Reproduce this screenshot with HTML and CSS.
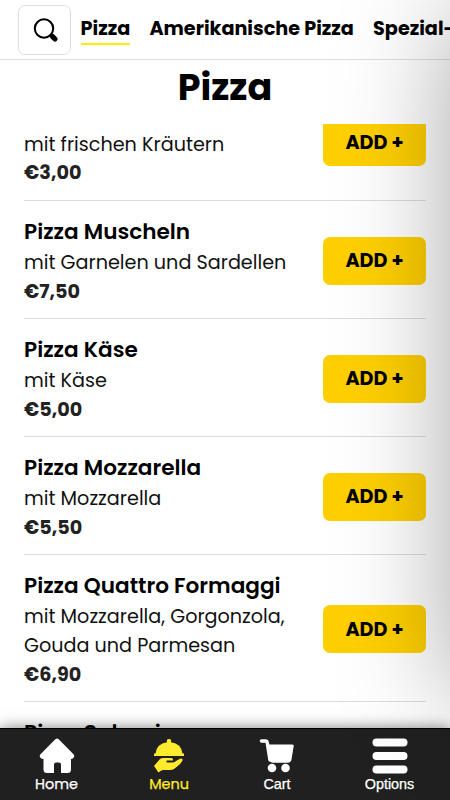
FILE: index.html
```html
<!DOCTYPE html>
<html lang="de">
<head>
<meta charset="utf-8">
<title>Pizza</title>
<link rel="stylesheet" href="styles.css">
</head>
<body>
<div class="app">
  <header class="categories">
    <button class="search" aria-label="Suche">
      <svg width="26" height="26" viewBox="0 0 26 26"><circle cx="11" cy="10.5" r="9.2" fill="none" stroke="#000" stroke-width="2.1"/><path d="M17.5 16.5l1.2 1.2" stroke="#000" stroke-width="2.500"/><path d="M19.3 18.3l2.7 2.7" stroke="#000" stroke-width="5.200" stroke-linecap="round"/></svg>
    </button>
    <a class="category active">Pizza</a>
    <a class="category">Amerikanische Pizza</a>
    <a class="category">Spezial-Pizza</a>
  </header>
  <h1 class="title">Pizza</h1>
  <main class="list">
    <article class="item first">
      <div class="info"><h2></h2><p>mit frischen Kräutern</p><strong>€3,00</strong></div>
      <button class="add">ADD +</button>
    </article>
    <article class="item">
      <div class="info"><h2>Pizza Muscheln</h2><p>mit Garnelen und Sardellen</p><strong>€7,50</strong></div>
      <button class="add">ADD +</button>
    </article>
    <article class="item">
      <div class="info"><h2>Pizza Käse</h2><p>mit Käse</p><strong>€5,00</strong></div>
      <button class="add">ADD +</button>
    </article>
    <article class="item">
      <div class="info"><h2>Pizza Mozzarella</h2><p>mit Mozzarella</p><strong>€5,50</strong></div>
      <button class="add">ADD +</button>
    </article>
    <article class="item">
      <div class="info"><h2>Pizza Quattro Formaggi</h2><p>mit Mozzarella, Gorgonzola,<br>Gouda und Parmesan</p><strong>€6,90</strong></div>
      <button class="add">ADD +</button>
    </article>
    <article class="item">
      <div class="info"><h2>Pizza Salami</h2></div>
    </article>
  </main>
  <nav class="tabs">
    <a class="tab home">
      <svg width="36" height="36" viewBox="0 0 36 36"><path fill="currentColor" d="M16.3 1.3Q18-.2 19.7 1.3L34.5 16.2Q36 18 34.5 19.8Q33.5 21 32 21V31.5Q32 35 28.5 35H22V26.5Q22 24.500 20 24.500H17Q15 24.500 15 26.500V35H8Q4.500 35 4.500 31.500V21Q2.500 21 1.500 19.800Q0 18 1.500 16.200Z"/></svg>
      <span>Home</span>
    </a>
    <a class="tab menu">
      <svg width="36" height="36" viewBox="0 0 36 36"><g fill="currentColor"><path d="M16 4.200Q15.200 1 18 1T20 4.200Q30.500 5.800 31.500 15.500H33V18H3V15.500H4.500Q5.500 5.800 16 4.200Z"/><path d="M3 28L9 21Q10.500 20 12 20H20Q22.500 20.200 22 22.500H15.500V24.500H21Q23.500 24.500 25 23L29 20.700Q31.500 19.800 31.700 22Q31 24 28 27L23 31Q21.500 32 19 32H12Q10 32 7.500 34.500Z"/></g></svg>
      <span>Menu</span>
    </a>
    <a class="tab cart">
      <svg width="36" height="36" viewBox="0 0 36 36"><path d="M2.500 3H6.500Q8 3 8.300 5L11 22" fill="none" stroke="currentColor" stroke-width="3.500" stroke-linecap="round"/><path fill="currentColor" d="M7.800 6.500H33.500Q35 6.500 34.700 8L32.600 21Q32 24.800 28.500 24.800H14Q11 24.800 10.200 21Z"/><circle cx="13" cy="30" r="4.300" fill="currentColor"/><circle cx="26.500" cy="30" r="4.300" fill="currentColor"/></svg>
      <span>Cart</span>
    </a>
    <a class="tab options">
      <svg width="36" height="36" viewBox="0 0 36 36"><g fill="currentColor"><rect x="0.500" y="0.500" width="35" height="8" rx="4"/><rect x="0.500" y="14" width="35" height="8" rx="4"/><rect x="0.500" y="27.500" width="35" height="8" rx="4"/></g></svg>
      <span>Options</span>
    </a>
  </nav>
  <div class="edge-shadow"></div>
</div>
</body>
</html>
```

FILE: styles.css
```css
* { box-sizing: border-box; }
body { margin: 0; background: #fff; color: #000; font-family: Poppins, Inter, sans-serif; }
h1, h2, p { margin: 0; }
button { font-family: inherit; color: inherit; border: 0; padding: 0; }
.app { position: relative; width: 450px; height: 800px; overflow: hidden; display: flex; flex-direction: column; }
.categories { flex: none; height: 60px; border-bottom: 1px solid #dfdfdf; display: flex; align-items: flex-start; padding: 5px 0 0 18px; overflow: hidden; }
.search { flex: none; width: 53px; height: 50px; margin-right: 9.500px; border: 1px solid #dfdfdf; border-radius: 7px; background: #fff; display: flex; align-items: center; justify-content: center; padding: 1px 0 0 2px; }
.category { flex: none; height: 40px; margin-right: 19.200px; padding-top: 9px; font-size: 19.200px; font-weight: 700; line-height: 30px; white-space: nowrap; }
.category.active { border-bottom: 2px solid #ffee00; }
.title { flex: none; height: 64px; line-height: 56px; text-align: center; font-size: 36.500px; font-weight: 700; }
.list { flex: 1; min-height: 0; overflow: hidden; padding: 0 24px; }
.item { display: flex; justify-content: space-between; align-items: center; padding: 14.200px 0 12.400px; border-bottom: 1px solid #dcdcdc; }
.first { margin-top: -41.600px; }
.item h2 { height: 33px; line-height: 33px; font-size: 21.600px; font-weight: 600; white-space: nowrap; }
.item p, .item strong { position: relative; top: 1px; font-size: 19.200px; line-height: 28.800px; }
.item p { color: #111; white-space: nowrap; }
.item strong { display: block; font-weight: 700; color: #222; }
.add { flex: none; width: 103px; height: 48px; border-radius: 7px; margin-top: 1px; background: #ffd000; font-size: 19.200px; font-weight: 700; }
.tabs { position: relative; flex: none; height: 72px; background: #202020; border-top: 1px solid #000; color: #fff; display: grid; grid-template-columns: 113px 112px 104px 121px; box-shadow: 0 0 14px rgba(0,0,0,.5); }
.tab { display: flex; flex-direction: column; align-items: center; padding-top: 9px; font-size: 14.400px; line-height: 20px; }
.tab span { -webkit-text-stroke: 0.250px currentColor; }
.tab svg { display: block; }
.tab.menu { color: #ffeb2d; }
.cart, .options { font-family: "Liberation Sans", sans-serif; }
.edge-shadow { position: absolute; left: 450px; top: 15px; width: 300px; height: 680px; box-shadow: 0 0 110px rgba(0,0,0,.35); pointer-events: none; }
```
